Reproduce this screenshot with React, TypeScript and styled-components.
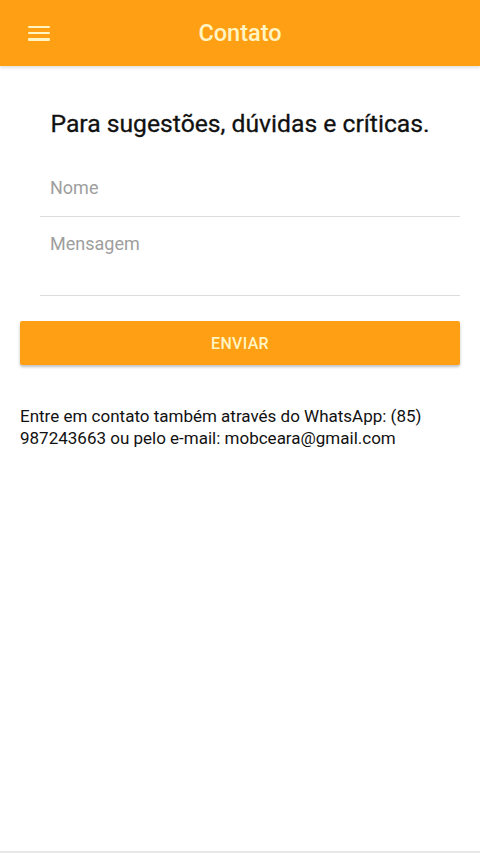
import React from "react";
import styled, { createGlobalStyle } from "styled-components";

const GlobalStyle = createGlobalStyle`
  html, body {
    margin: 0;
    padding: 0;
    background: #fff;
    font-family: Roboto, "Liberation Sans", sans-serif;
  }
  * { box-sizing: border-box; }
`;

const Page = styled.div`
  width: 480px;
  height: 853px;
  display: flex;
  flex-direction: column;
  background: #fff;
  border-bottom: 2px solid #e8e8e8;
`;

const Header = styled.header`
  height: 66px;
  background: #ff9f14;
  display: flex;
  align-items: center;
  padding: 0 28px;
  box-shadow: 0 2px 3px rgba(0, 0, 0, 0.12);
`;

const MenuButton = styled.button`
  background: none;
  border: none;
  padding: 0;
  width: 22px;
  height: 15px;
  display: flex;
  flex-direction: column;
  justify-content: space-between;
  cursor: pointer;
`;

const MenuBar = styled.span`
  display: block;
  height: 2.5px;
  width: 22px;
  background: #fff4c2;
  border-radius: 1px;
`;

const Title = styled.h1`
  flex: 1;
  margin: 0 22px 0 0;
  text-align: center;
  color: #fff4c2;
  font-size: 23.5px;
  font-weight: 500;
`;

const Content = styled.main`
  padding: 44px 20px 0;
  display: flex;
  flex-direction: column;
`;

const Heading = styled.h2`
  margin: 0 0 23px;
  line-height: 28px;
  text-align: center;
  font-size: 24.7px;
  font-weight: 400;
  color: #111;
  -webkit-text-stroke: 0.3px #111;
`;

const Form = styled.form`
  display: flex;
  flex-direction: column;
`;

const Field = styled.div<{ $tall?: boolean }>`
  margin: 0 0 0 20px;
  height: ${(p) => (p.$tall ? "79px" : "56px")};
  border-bottom: 1.5px solid #dcdcdc;
  padding: 16px 10px 0;
`;

const Input = styled.input`
  width: 100%;
  border: none;
  outline: none;
  padding: 0;
  font-family: inherit;
  font-size: 18px;
  color: #333;
  background: transparent;
  &::placeholder { color: #9e9e9e; }
`;

const TextArea = styled.textarea`
  width: 100%;
  border: none;
  outline: none;
  resize: none;
  padding: 0;
  font-family: inherit;
  font-size: 18px;
  color: #333;
  background: transparent;
  &::placeholder { color: #9e9e9e; }
`;

const Submit = styled.button`
  margin-top: 25px;
  height: 44px;
  background: #ff9f14;
  border: none;
  border-radius: 2px;
  color: #fff4c2;
  font-family: inherit;
  font-size: 16px;
  font-weight: 500;
  letter-spacing: 0.3px;
  box-shadow: 0 2px 3px rgba(0, 0, 0, 0.25);
  cursor: pointer;
`;

const Info = styled.p`
  margin: 40px 0 0;
  font-size: 17px;
  line-height: 22px;
  color: #111;
`;

export default function App() {
  return (
    <>
      <GlobalStyle />
      <Page>
        <Header>
          <MenuButton aria-label="menu">
            <MenuBar />
            <MenuBar />
            <MenuBar />
          </MenuButton>
          <Title>Contato</Title>
        </Header>
        <Content>
          <Heading>Para sugestões, dúvidas e críticas.</Heading>
          <Form onSubmit={(e) => e.preventDefault()}>
            <Field>
              <Input placeholder="Nome" />
            </Field>
            <Field $tall>
              <TextArea placeholder="Mensagem" rows={2} />
            </Field>
            <Submit type="submit">ENVIAR</Submit>
          </Form>
          <Info>
            Entre em contato também através do WhatsApp: (85) 987243663 ou pelo
            e-mail: mobceara@gmail.com
          </Info>
        </Content>
      </Page>
    </>
  );
}
